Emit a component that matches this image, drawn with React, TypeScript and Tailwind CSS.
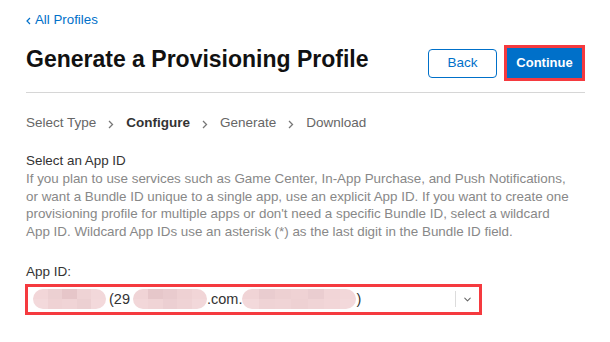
import { ChevronDown } from 'lucide-react'

const steps = [
  { label: 'Select Type', active: false },
  { label: 'Configure', active: true },
  { label: 'Generate', active: false },
  { label: 'Download', active: false },
]

const intro = [
  'If you plan to use services such as Game Center, In-App Purchase, and Push Notifications,',
  'or want a Bundle ID unique to a single app, use an explicit App ID. If you want to create one',
  "provisioning profile for multiple apps or don't need a specific Bundle ID, select a wildcard",
  'App ID. Wildcard App IDs use an asterisk (*) as the last digit in the Bundle ID field.',
]

// pixelated pink patches that hide private values in the screenshot
const Blur = ({ width, cells, className = '' }: { width: number; cells: string[][]; className?: string }) => (
  <span
    className={`inline-flex flex-col h-[20px] rounded-full overflow-hidden shrink-0 ${className}`}
    style={{ width }}
  >
    {cells.map((row, i) => (
      <span key={i} className="flex flex-1">
        {row.map((c, j) => (
          <span key={j} className="flex-1" style={{ background: c }} />
        ))}
      </span>
    ))}
  </span>
)

const Crumb = () => (
  <svg width="6" height="9" viewBox="0 0 6 9" className="mx-[12px] mt-[3px]">
    <path d="M1 1l3.5 3.5L1 8" fill="none" stroke="#777" strokeWidth="1.3" />
  </svg>
)

export default function App() {
  return (
    <div className="w-[610px] h-[342px] bg-white px-[26px] font-['Liberation_Sans',Arial,sans-serif] text-[13px]">
      <div className="pt-[12px] leading-[16px]">
        <a className="text-[#0070c9] text-[13.3px] flex items-center gap-[4px] w-fit">
          <svg width="5" height="8" viewBox="0 0 5 8" className="mt-px">
            <path d="M4 1L1 4l3 3" fill="none" stroke="#0070c9" strokeWidth="1.2" />
          </svg>
          All Profiles
        </a>
      </div>

      <div className="mt-[17px] flex items-start justify-between w-[559px]">
        <h1 className="text-[23px] leading-[28px] font-bold text-[#111]">
          Generate a Provisioning Profile
        </h1>
        <div className="flex items-center gap-[7px]">
          <button className="w-[69px] h-[29px] rounded-[4px] border border-[#0070c9] text-[#0070c9] text-[13.5px]">
            Back
          </button>
          <div className="border-[3px] border-[#f53a3f]">
            <button className="w-[75px] h-[30px] bg-[#0070c9] text-white font-bold text-[13px] block">
              Continue
            </button>
          </div>
        </div>
      </div>

      <div className="mt-[11px] h-px w-[559px] bg-[#d6d6d6]" />

      <div className="mt-[22px] flex items-center leading-[16px] text-[13.5px] text-[#666]">
        {steps.map((s, i) => (
          <div key={s.label} className="flex items-center">
            {i > 0 && <Crumb />}
            <span className={s.active ? 'font-bold text-[#333]' : ''}>{s.label}</span>
          </div>
        ))}
      </div>

      <div className="mt-[21px] leading-[17.75px] text-[13.4px]">
        <div className="text-[#333]">Select an App ID</div>
        <p className="text-[#888]">
          {intro.map((line) => (
            <span key={line} className="block whitespace-nowrap">
              {line}
            </span>
          ))}
        </p>
      </div>

      <div className="mt-[23px] leading-[16px] text-[13.5px] text-[#333]">App ID:</div>

      <div className="mt-[4px] -ml-px w-[457px] h-[31px] border-[3px] border-[#f53a3f] bg-white flex items-center text-[#333]">
        <div className="flex-1 flex items-center pl-[5px] leading-[16px] text-[14.5px]">
          <Blur
            width={73}
            cells={[
              ['#f2d6d8', '#ecd0d2', '#e6c6c9', '#efd3d5', '#f2d8da'],
              ['#f3d9db', '#efd2d4', '#f0d4d6', '#ecd0d2', '#f3d9db'],
            ]}
          />
          <span className="ml-[3px]">(29</span>
          <Blur
            width={74}
            className="ml-[3px]"
            cells={[
              ['#f0d4d6', '#e6c7ca', '#e9cbce', '#eed1d3', '#f1d5d7'],
              ['#f2d7d9', '#f0d4d6', '#eccfd2', '#efd3d5', '#f2d8da'],
            ]}
          />
          <span>.com.</span>
          <Blur
            width={114}
            cells={[
              ['#f0d4d6', '#e9cccf', '#edd0d2', '#efd2d4', '#eacdd0', '#f1d5d7', '#f2d7d9'],
              ['#f3d9db', '#efd3d5', '#f0d4d6', '#eed1d3', '#f0d4d6', '#f2d6d8', '#f3d9db'],
            ]}
          />
          <span>)</span>
        </div>
        <div className="w-px h-[16px] bg-[#dcdcdc]" />
        <ChevronDown className="w-[11px] h-[11px] mx-[6px] text-[#666]" strokeWidth={2.2} />
      </div>
    </div>
  )
}
